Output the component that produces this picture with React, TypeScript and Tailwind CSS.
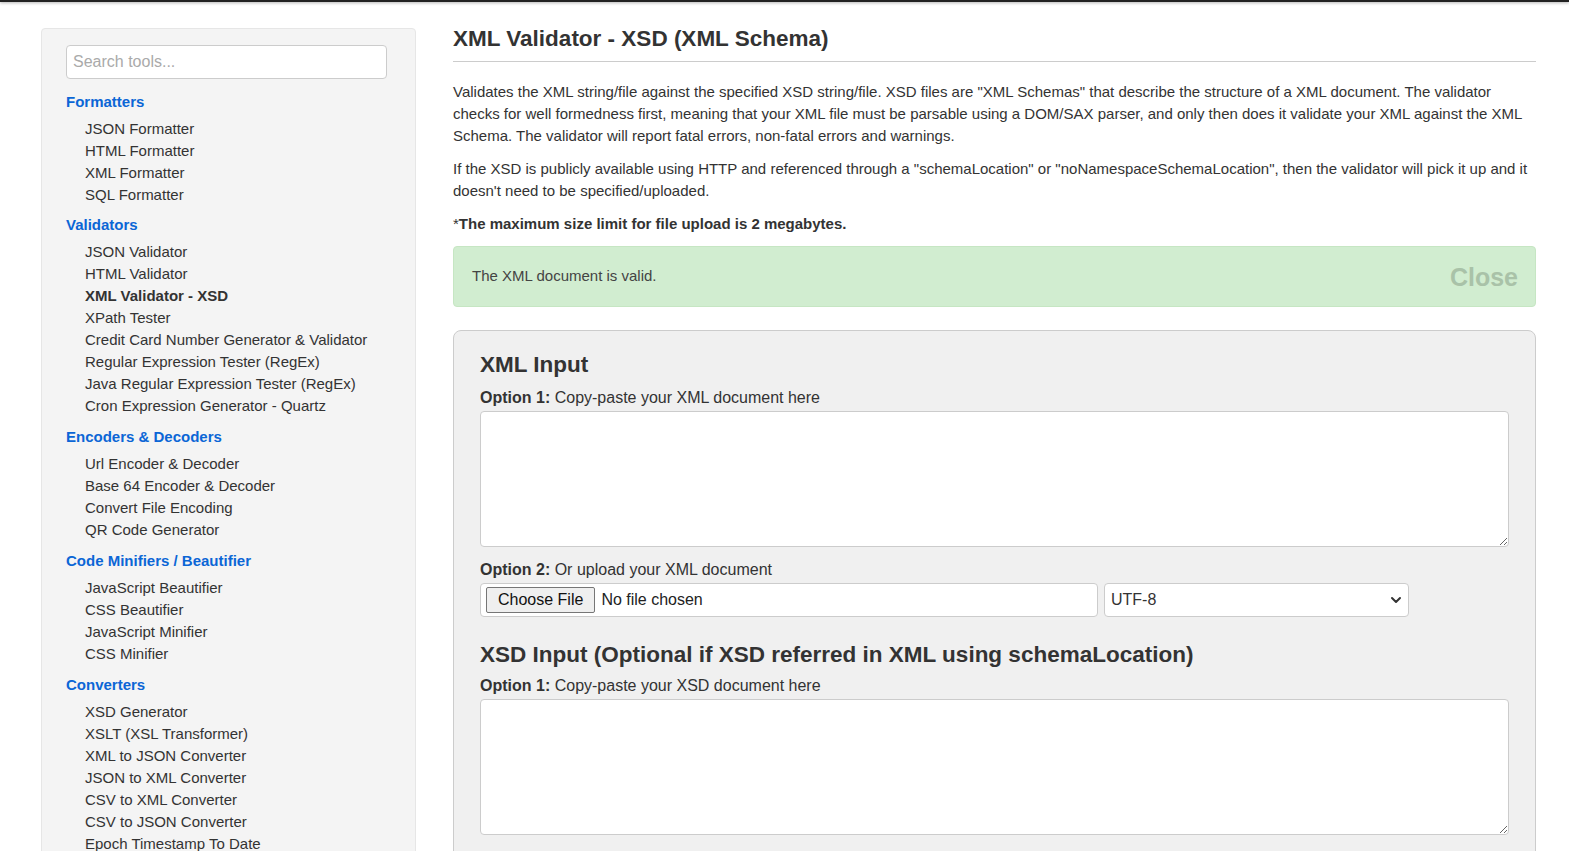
import React from "react";
import { ChevronDown } from "lucide-react";

const groups = [
  {
    title: "Formatters",
    items: ["JSON Formatter", "HTML Formatter", "XML Formatter", "SQL Formatter"],
  },
  {
    title: "Validators",
    items: [
      "JSON Validator",
      "HTML Validator",
      "XML Validator - XSD",
      "XPath Tester",
      "Credit Card Number Generator & Validator",
      "Regular Expression Tester (RegEx)",
      "Java Regular Expression Tester (RegEx)",
      "Cron Expression Generator - Quartz",
    ],
  },
  {
    title: "Encoders & Decoders",
    items: [
      "Url Encoder & Decoder",
      "Base 64 Encoder & Decoder",
      "Convert File Encoding",
      "QR Code Generator",
    ],
  },
  {
    title: "Code Minifiers / Beautifier",
    items: [
      "JavaScript Beautifier",
      "CSS Beautifier",
      "JavaScript Minifier",
      "CSS Minifier",
    ],
  },
  {
    title: "Converters",
    items: [
      "XSD Generator",
      "XSLT (XSL Transformer)",
      "XML to JSON Converter",
      "JSON to XML Converter",
      "CSV to XML Converter",
      "CSV to JSON Converter",
      "Epoch Timestamp To Date",
      "Date To Epoch Timestamp",
    ],
  },
];

const Label = ({ option, text }: { option: string; text: string }) => (
  <div className="text-[16px] leading-[22px] text-[#333]">
    <span className="font-bold">{option}</span> {text}
  </div>
);

const App = () => {
  return (
    <div className="h-[851px] overflow-hidden bg-white font-['Liberation_Sans',Arial,sans-serif] text-[#333]">
      {/* top bar */}
      <div className="h-[2px] bg-[#222] shadow-[0_1px_3px_rgba(0,0,0,0.35)]" />

      <div className="flex items-start pl-[41px] pr-[33px] gap-[37px]">
        {/* Sidebar */}
        <aside className="mt-[26px] w-[375px] shrink-0 rounded-[4px] border border-[#e6e6e6] bg-[#f4f4f4] pl-[24px] pr-[28px] pt-[16px] pb-6">
          <input
            type="text"
            placeholder="Search tools..."
            className="h-[34px] w-[321px] rounded-[4px] border border-[#cccccc] bg-white px-[6px] text-[16px] text-[#333] placeholder:text-[#aaaaaa] outline-none"
          />
          {groups.map((group, gi) => (
            <div
              key={group.title}
              className={gi === 0 ? "mt-[13px]" : gi === 1 ? "mt-[9px]" : "mt-[10px]"}
            >
              <h4 className="text-[15px] leading-[20px] font-bold text-[#0b66d6]">
                {group.title}
              </h4>
              <ul className="mt-[6px] pl-[19px]">
                {group.items.map((item) => (
                  <li
                    key={item}
                    className={
                      item === "XML Validator - XSD"
                        ? "text-[15px] leading-[22px] font-bold text-[#333]"
                        : "text-[15px] leading-[22px] text-[#333]"
                    }
                  >
                    {item}
                  </li>
                ))}
              </ul>
            </div>
          ))}
        </aside>

        {/* Main */}
        <main className="mt-[24px] w-[1083px] shrink-0">
          <h1 className="border-b border-[#cccccc] pb-[9px] text-[22.5px] leading-[26px] font-bold text-[#333]">
            XML Validator - XSD (XML Schema)
          </h1>

          <p className="mt-[19px] text-[15px] leading-[22px]">
            Validates the XML string/file against the specified XSD string/file. XSD files are "XML Schemas" that describe the structure of a XML document. The validator checks for well formedness first, meaning that your XML file must be parsable using a DOM/SAX parser, and only then does it validate your XML against the XML Schema. The validator will report fatal errors, non-fatal errors and warnings.
          </p>
          <p className="mt-[11px] text-[15px] leading-[22px]">
            If the XSD is publicly available using HTTP and referenced through a "schemaLocation" or "noNamespaceSchemaLocation", then the validator will pick it up and it doesn't need to be specified/uploaded.
          </p>
          <p className="mt-[11px] text-[15px] leading-[22px]">
            *<span className="font-bold">The maximum size limit for file upload is 2 megabytes.</span>
          </p>

          {/* Alert */}
          <div className="mt-[11px] flex h-[61px] items-center justify-between rounded-[4px] border border-[#c6e6c3] bg-[#d1edd0] pl-[18px] pr-[17px]">
            <span className="text-[15px] text-[#444]">The XML document is valid.</span>
            <span className="mt-[3px] text-[25px] font-bold text-[#a9c2a8]">Close</span>
          </div>

          {/* Panel */}
          <div className="mt-[23px] rounded-[8px] border border-[#cccccc] bg-[#f0f0f0] px-[26px] pt-[21px] pb-8">
            <h2 className="text-[22.5px] leading-[26px] font-bold text-[#333]">XML Input</h2>
            <div className="mt-[9px]">
              <Label option="Option 1:" text="Copy-paste your XML document here" />
            </div>
            <textarea className="mt-[2px] block h-[136px] w-full rounded-[4px] border border-[#cccccc] bg-white" />

            <div className="mt-[12px]">
              <Label option="Option 2:" text="Or upload your XML document" />
            </div>
            <div className="mt-[2px] flex gap-[6px]">
              <div className="flex h-[34px] w-[618px] items-center gap-[6px] rounded-[4px] border border-[#cccccc] bg-white pl-[5px]">
                <span className="flex h-[26px] items-center rounded-[2px] border border-[#767676] bg-[#efefef] px-[11px] text-[16px] text-[#111]">
                  Choose File
                </span>
                <span className="text-[16px] text-[#222]">No file chosen</span>
              </div>
              <div className="relative h-[34px] w-[305px]">
                <div className="flex h-[34px] items-center rounded-[4px] border border-[#cccccc] bg-white pl-[6px] text-[16px] text-[#333]">
                  UTF-8
                </div>
                <ChevronDown
                  className="absolute right-[5px] top-[9px] h-[16px] w-[16px] text-[#333]"
                  strokeWidth={3}
                />
              </div>
            </div>

            <h2 className="mt-[25px] text-[22.5px] leading-[26px] font-bold text-[#333]">
              XSD Input (Optional if XSD referred in XML using schemaLocation)
            </h2>
            <div className="mt-[7px]">
              <Label option="Option 1:" text="Copy-paste your XSD document here" />
            </div>
            <textarea className="mt-[2px] block h-[136px] w-full rounded-[4px] border border-[#cccccc] bg-white" />
          </div>
        </main>
      </div>
    </div>
  );
};

export default App;
